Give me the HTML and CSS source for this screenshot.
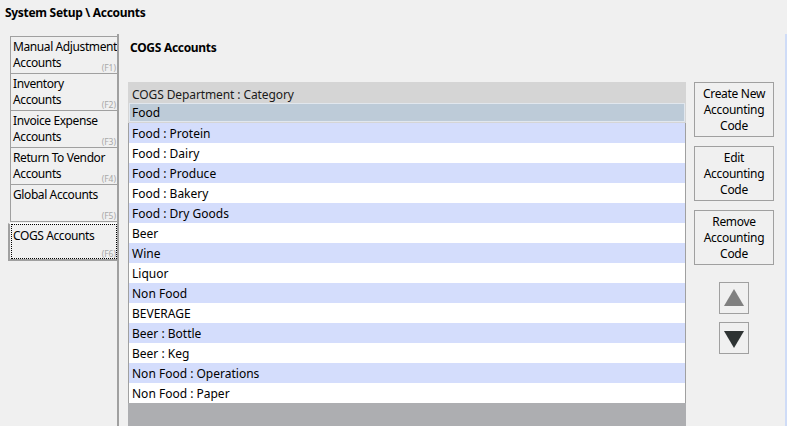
FILE: index.html
```html
<!DOCTYPE html>
<html>
<head>
<meta charset="utf-8">
<link rel="stylesheet" href="styles.css">
</head>
<body>
<div class="page">
  <div class="title">System Setup \ Accounts</div>
  <div class="main">
    <div class="sidebar">
      <div class="tabs">
        <div class="tab"><span class="tab-label">Manual Adjustment<br>Accounts</span><span class="key">(F1)</span></div>
        <div class="tab"><span class="tab-label">Inventory<br>Accounts</span><span class="key">(F2)</span></div>
        <div class="tab"><span class="tab-label">Invoice Expense<br>Accounts</span><span class="key">(F3)</span></div>
        <div class="tab"><span class="tab-label">Return To Vendor<br>Accounts</span><span class="key">(F4)</span></div>
        <div class="tab"><span class="tab-label">Global Accounts</span><span class="key">(F5)</span></div>
        <div class="tab active"><div class="focus"><span class="tab-label">COGS Accounts</span><span class="key">(F6)</span></div></div>
      </div>
    </div>
    <div class="content">
      <div class="heading">COGS Accounts</div>
      <div class="work">
        <div class="grid">
          <div class="grid-head">COGS Department : Category</div>
          <div class="grid-body">
            <div class="row selected"><span>Food</span></div>
            <div class="row alt">Food : Protein</div>
            <div class="row">Food : Dairy</div>
            <div class="row alt">Food : Produce</div>
            <div class="row">Food : Bakery</div>
            <div class="row alt">Food : Dry Goods</div>
            <div class="row">Beer</div>
            <div class="row alt">Wine</div>
            <div class="row">Liquor</div>
            <div class="row alt">Non Food</div>
            <div class="row">BEVERAGE</div>
            <div class="row alt">Beer : Bottle</div>
            <div class="row">Beer : Keg</div>
            <div class="row alt">Non Food : Operations</div>
            <div class="row">Non Food : Paper</div>
          </div>
          <div class="grid-empty"></div>
        </div>
        <div class="actions">
          <button class="btn">Create New<br>Accounting<br>Code</button>
          <button class="btn">Edit<br>Accounting<br>Code</button>
          <button class="btn">Remove<br>Accounting<br>Code</button>
          <div class="arrows">
            <button class="arrow"><svg width="22" height="22" viewBox="0 0 22 22"><polygon points="11,2 21,19 1,19" fill="#808080"/></svg></button>
            <button class="arrow"><svg width="22" height="22" viewBox="0 0 22 22"><polygon points="1,4 21,4 11,21" fill="#2e3333"/></svg></button>
          </div>
        </div>
      </div>
    </div>
    <div class="edge"></div>
  </div>
</div>
</body>
</html>
```
FILE: styles.css
```css
* { box-sizing: border-box; }
html, body {
  margin: 0;
  padding: 0;
  background: #f0f0f0;
  font-family: "Noto Sans", "Open Sans", sans-serif;
  font-size: 12px;
  color: #000;
}
.page {
  width: 787px;
  height: 426px;
  overflow: hidden;
  display: flex;
  flex-direction: column;
}
.title {
  font-weight: bold;
  font-size: 12px;
  padding: 4px 0 0 5px;
  height: 34px;
  letter-spacing: -0.3px;
}
.main {
  flex: 1;
  display: flex;
}
.sidebar {
  width: 119px;
  border-right: 2px solid #a0a0a0;
  padding: 2px 0 0 10px;
}
.tabs {
  display: flex;
  flex-direction: column;
}
.tab {
  position: relative;
  height: 38px;
  border: 1px solid #a0a0a0;
  border-right: none;
  margin-top: -1px;
  padding: 2px 0 0 2px;
  line-height: 16px;
  letter-spacing: -0.4px;
  white-space: nowrap;
  overflow: hidden;
}
.tab:first-child { margin-top: 0; }
.tab-label { display: inline-block; vertical-align: top; }
.key {
  position: absolute;
  right: 1px;
  bottom: 0px;
  font-size: 8.5px;
  line-height: 10px;
  color: #a8a8a8;
  letter-spacing: 0;
}
.tab.active {
  margin-left: -2px;
  margin-top: 1px;
  height: 38px;
  border: none;
  border-left: 2px solid #a0a0a0;
  border-bottom: 2px solid #a0a0a0;
  border-top: 1px solid #ffffff;
  padding: 0 0 0 1px;
  overflow: visible;
}
.focus {
  position: relative;
  height: 35px;
  border: 1px dotted #000;
  padding: 3px 0 0 1px;
}
.focus .key { right: 0; bottom: -1px; }
.content {
  flex: 1;
  padding: 5px 0 0 9px;
  display: flex;
  flex-direction: column;
}
.heading {
  font-weight: bold;
  height: 43px;
  padding-left: 2px;
  letter-spacing: -0.3px;
}
.work {
  display: flex;
  gap: 8px;
  flex: 1;
}
.grid {
  width: 558px;
  display: flex;
  flex-direction: column;
}
.grid-head {
  height: 21px;
  background: #d5d5d5;
  padding: 5px 0 0 4px;
  line-height: 15px;
  color: #1a1a1a;
  letter-spacing: -0.1px;
}
.grid-body {
  border-left: 1px solid #a0a0a0;
  border-right: 1px solid #a0a0a0;
  background: #fff;
}
.row {
  height: 20px;
  line-height: 19px;
  padding: 1px 0 0 3px;
}
.row.alt { background: #d4ddfc; }
.row.selected {
  height: 20px;
  padding: 0;
  background: #d5d5d5;
  margin-left: -1px;
  margin-right: -1px;
}
.row.selected span {
  display: block;
  height: 19px;
  line-height: 18px;
  margin: 0 1px 0 1px;
  padding-left: 2px;
  background: #bdcbd8;
  border: 1px solid #e1e7ee;
}
.grid-empty {
  flex: 1;
  background: #adaeb1;
}
.actions {
  width: 80px;
  display: flex;
  flex-direction: column;
  gap: 9px;
}
.btn {
  width: 80px;
  height: 55px;
  border: 1px solid #a0a0a0;
  background: #f0f0f0;
  font-family: inherit;
  font-size: 12px;
  line-height: 16px;
  padding: 1px 0 0 0;
  color: #000;
  letter-spacing: -0.3px;
}
.arrows {
  display: flex;
  flex-direction: column;
  align-items: center;
  gap: 8px;
  margin-top: 8px;
}
.arrow {
  width: 30px;
  height: 32px;
  border: 1px solid #a0a0a0;
  background: #f0f0f0;
  padding: 0;
  display: flex;
  align-items: center;
  justify-content: center;
}
.edge {
  width: 2px;
  background: #cfdcf7;
}
```
